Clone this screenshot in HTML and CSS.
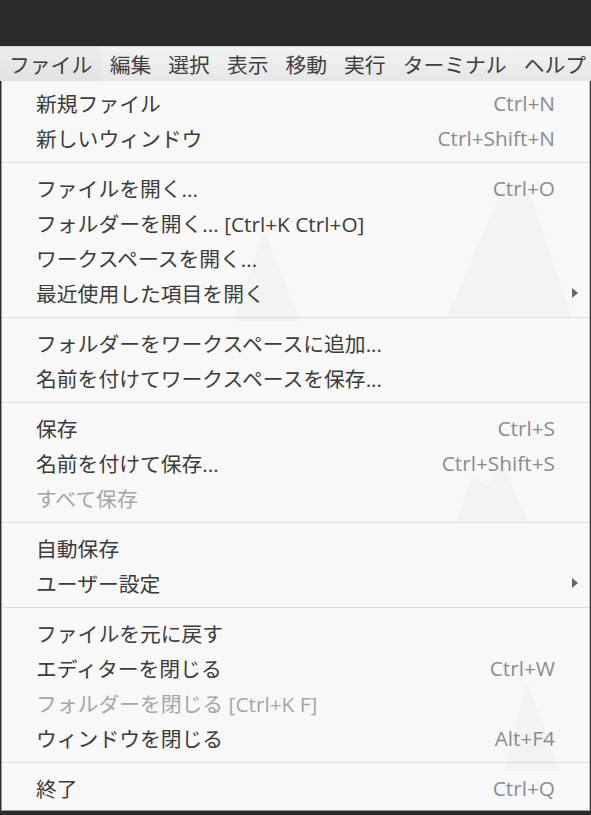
FILE: index.html
```html
<!DOCTYPE html>
<html lang="ja">
<head>
    <meta charset="UTF-8">
    <title>ファイル メニュー</title>
    <link rel="stylesheet" href="styles.css">
</head>
<body>
    <!-- Barre de titre sombre -->
    <div class="titlebar"></div>

    <!-- Barre de menu -->
    <nav class="menubar">
        <span class="menubar-item active">ファイル</span>
        <span class="menubar-item">編集</span>
        <span class="menubar-item">選択</span>
        <span class="menubar-item">表示</span>
        <span class="menubar-item">移動</span>
        <span class="menubar-item">実行</span>
        <span class="menubar-item">ターミナル</span>
        <span class="menubar-item">ヘルプ</span>
    </nav>

    <!-- Menu déroulant -->
    <div class="dropdown">
        <svg class="wallpaper" width="587" height="729" viewBox="0 0 587 729">
            <polygon points="232,240 262,150 298,240" />
            <polygon points="445,237 500,108 528,112 570,237" />
            <polygon points="455,440 470,395 485,405 500,380 525,440" />
            <polygon points="502,690 525,600 558,690" />
        </svg>
        <ul class="menu-list">
            <li class="row"><span>新規ファイル</span><span class="key">Ctrl+N</span></li>
            <li class="row"><span>新しいウィンドウ</span><span class="key">Ctrl+Shift+N</span></li>
            <li class="sep"></li>
            <li class="row"><span>ファイルを開く...</span><span class="key">Ctrl+O</span></li>
            <li class="row"><span>フォルダーを開く... [Ctrl+K Ctrl+O]</span></li>
            <li class="row"><span>ワークスペースを開く...</span></li>
            <li class="row"><span>最近使用した項目を開く</span><span class="arrow"></span></li>
            <li class="sep"></li>
            <li class="row"><span>フォルダーをワークスペースに追加...</span></li>
            <li class="row"><span>名前を付けてワークスペースを保存...</span></li>
            <li class="sep"></li>
            <li class="row"><span>保存</span><span class="key">Ctrl+S</span></li>
            <li class="row"><span>名前を付けて保存...</span><span class="key">Ctrl+Shift+S</span></li>
            <li class="row disabled"><span>すべて保存</span></li>
            <li class="sep"></li>
            <li class="row"><span>自動保存</span></li>
            <li class="row"><span>ユーザー設定</span><span class="arrow"></span></li>
            <li class="sep"></li>
            <li class="row"><span>ファイルを元に戻す</span></li>
            <li class="row"><span>エディターを閉じる</span><span class="key">Ctrl+W</span></li>
            <li class="row disabled"><span>フォルダーを閉じる [Ctrl+K F]</span></li>
            <li class="row"><span>ウィンドウを閉じる</span><span class="key">Alt+F4</span></li>
            <li class="sep"></li>
            <li class="row"><span>終了</span><span class="key">Ctrl+Q</span></li>
        </ul>
    </div>
</body>
</html>
```

FILE: styles.css
```css
/* Fond sombre de la fenêtre */
body {
    margin: 0;
    height: 815px;
    overflow: hidden;
    background: #2b2929;
    font-family: "Open Sans", "Noto Sans CJK JP", sans-serif;
    font-size: 20.8px;
    color: #3c3c3c;
}

.titlebar {
    height: 46px;
}

/* Barre de menu */
.menubar {
    display: flex;
    height: 35px;
    align-items: stretch;
    background: linear-gradient(180deg, #f3f3f3, #e6e6e6);
    border-top: 1px solid #d6d6d6;
    box-sizing: border-box;
}

.menubar-item {
    display: flex;
    align-items: center;
    padding: 0 8.5px;
    white-space: nowrap;
    color: #404040;
}

.menubar-item.active {
    padding: 0 9px;
    background: linear-gradient(180deg, #ededed, #e2e2e2);
}

/* Menu déroulant */
.dropdown {
    position: relative;
    width: 587px;
    margin-left: 1px;
    background: #f8f8f8;
    border-left: 1px solid #9a9a9a;
    border-bottom: 1px solid #9a9a9a;
    border-right: 1px solid #c8c8c8;
}

.wallpaper {
    position: absolute;
    top: 0;
    left: 0;
    fill: #f3f3f3;
}

.menu-list {
    position: relative;
    list-style: none;
    margin: 0;
    padding: 4px 0 5px;
}

.row {
    display: flex;
    align-items: center;
    justify-content: space-between;
    height: 35px;
    padding: 0 34px 0 34px;
    white-space: nowrap;
}

.row.disabled {
    color: #a6a6a6;
}

.key {
    color: #898c92;
}

.arrow {
    width: 0;
    height: 0;
    margin-right: -23px;
    border-top: 5px solid transparent;
    border-bottom: 5px solid transparent;
    border-left: 6px solid #666;
}

.sep {
    height: 1px;
    margin: 7px 0;
    background: #dcdcdc;
}
```
